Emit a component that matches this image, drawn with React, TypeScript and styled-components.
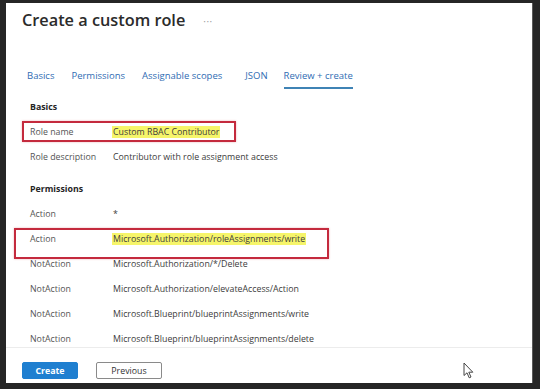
import React from "react";
import styled, { createGlobalStyle } from "styled-components";

const Global = createGlobalStyle`
  html, body { margin: 0; padding: 0; background: #262626; }
  body { font-family: "Open Sans", "Noto Sans", Arial, sans-serif; }
  * { box-sizing: border-box; }
`;

const Frame = styled.div`
  width: 540px;
  height: 389px;
  padding: 3px 7px 6px 6px;
  background: #262626;
`;

const Panel = styled.div`
  width: 100%;
  height: 100%;
  background: #ffffff;
  display: flex;
  flex-direction: column;
  border-right: 1px solid #5a5a5a;
`;

const Header = styled.div`
  height: 66px;
  padding: 5px 0 0 16px;
  display: flex;
  align-items: flex-start;
`;

const Title = styled.h1`
  margin: 0;
  font-size: 16.3px;
  line-height: 24px;
  font-weight: 600;
  color: #2b2b2b;
`;

const More = styled.span`
  margin: 1px 0 0 18px;
  font-size: 10px;
  line-height: 24px;
  color: #a0a0a0;
  letter-spacing: 0.5px;
`;

const Tabs = styled.div`
  display: flex;
  height: 20px;
  padding-left: 21px;
  gap: 17px;
`;

const Tab = styled.div<{ $active?: boolean; $ml?: number }>`
  font-size: 9.5px;
  line-height: 14px;
  padding-bottom: 4px;
  margin-left: ${(p) => p.$ml ?? 0}px;
  color: #2f6cb3;
  border-bottom: 2px solid ${(p) => (p.$active ? "#3f83b5" : "transparent")};
  white-space: nowrap;
`;

const Content = styled.div`
  flex: 1;
  min-height: 0;
  overflow: hidden;
  padding: 5px 0 0 24px;
`;

const Section = styled.div`
  & + & { margin-top: 7px; }
`;

const Heading = styled.div`
  height: 25px;
  display: flex;
  align-items: center;
  font-size: 8.8px;
  font-weight: 700;
  color: #252525;
`;

const Row = styled.div`
  position: relative;
  height: 25px;
  display: grid;
  grid-template-columns: 82px 1fr;
  align-items: center;
  font-size: 8.8px;
  color: #4a4a4a;
  white-space: nowrap;
`;

const Label = styled.span`
  color: #555555;
`;

const Value = styled.span<{ $mark?: boolean }>`
  justify-self: start;
  color: #3c3c3c;
  padding: 0 1px;
  background: ${(p) => (p.$mark ? "#f6f56a" : "transparent")};
`;

const Callout = styled.div<{ $l: number; $t: number; $w: number; $h: number }>`
  position: absolute;
  left: ${(p) => p.$l}px;
  top: ${(p) => p.$t}px;
  width: ${(p) => p.$w}px;
  height: ${(p) => p.$h}px;
  border: 2px solid #c42a3d;
  box-shadow: 0 0 2px rgba(196, 42, 61, 0.35);
  pointer-events: none;
`;

const Footer = styled.div`
  position: relative;
  border-top: 1px solid #ececec;
  padding: 14px 0 4px 16px;
  display: flex;
  gap: 18px;
`;

const Button = styled.button<{ $primary?: boolean }>`
  height: 17px;
  padding: 0;
  width: ${(p) => (p.$primary ? 56 : 66)}px;
  font-family: inherit;
  font-size: 8.8px;
  font-weight: ${(p) => (p.$primary ? 700 : 400)};
  color: ${(p) => (p.$primary ? "#ffffff" : "#333333")};
  background: ${(p) => (p.$primary ? "#1f7fd0" : "#ffffff")};
  border: 1px solid ${(p) => (p.$primary ? "#1f7fd0" : "#8a8a8a")};
  border-radius: 2px;
`;

const Cursor = styled.svg`
  position: absolute;
  left: 457px;
  top: 14px;
`;

type Item = { label: string; value: string; mark?: boolean; box?: { l: number; t: number; w: number; h: number } };

const basics: Item[] = [
  { label: "Role name", value: "Custom RBAC Contributor", mark: true, box: { l: -8, t: 2, w: 214, h: 21 } },
  { label: "Role description", value: "Contributor with role assignment access" },
];

const perms: Item[] = [
  { label: "Action", value: "*" },
  { label: "Action", value: "Microsoft.Authorization/roleAssignments/write", mark: true, box: { l: -16, t: 2, w: 315, h: 31 } },
  { label: "NotAction", value: "Microsoft.Authorization/*/Delete" },
  { label: "NotAction", value: "Microsoft.Authorization/elevateAccess/Action" },
  { label: "NotAction", value: "Microsoft.Blueprint/blueprintAssignments/write" },
  { label: "NotAction", value: "Microsoft.Blueprint/blueprintAssignments/delete" },
];

const Rows = ({ items }: { items: Item[] }) => (
  <>
    {items.map((it, i) => (
      <Row key={i}>
        <Label>{it.label}</Label>
        <Value $mark={it.mark}>{it.value}</Value>
        {it.box && <Callout $l={it.box.l} $t={it.box.t} $w={it.box.w} $h={it.box.h} />}
      </Row>
    ))}
  </>
);

export default function App() {
  return (
    <>
      <Global />
      <Frame>
        <Panel>
          <Header>
            <Title>Create a custom role</Title>
            <More>···</More>
          </Header>
          <Tabs>
            <Tab>Basics</Tab>
            <Tab>Permissions</Tab>
            <Tab>Assignable scopes</Tab>
            <Tab $ml={6}>JSON</Tab>
            <Tab $ml={-1} $active>Review + create</Tab>
          </Tabs>
          <Content>
            <Section>
              <Heading>Basics</Heading>
              <Rows items={basics} />
            </Section>
            <Section>
              <Heading>Permissions</Heading>
              <Rows items={perms} />
            </Section>
          </Content>
          <Footer>
            <Button $primary>Create</Button>
            <Button>Previous</Button>
            <Cursor width="11" height="17" viewBox="0 0 11 17">
              <path d="M1 1 L1 13.5 L4 10.8 L6.2 15.8 L8 15 L5.8 10.2 L9.8 10.2 Z" fill="#ffffff" stroke="#444444" strokeWidth="1" strokeLinejoin="round" />
            </Cursor>
          </Footer>
        </Panel>
      </Frame>
    </>
  );
}
